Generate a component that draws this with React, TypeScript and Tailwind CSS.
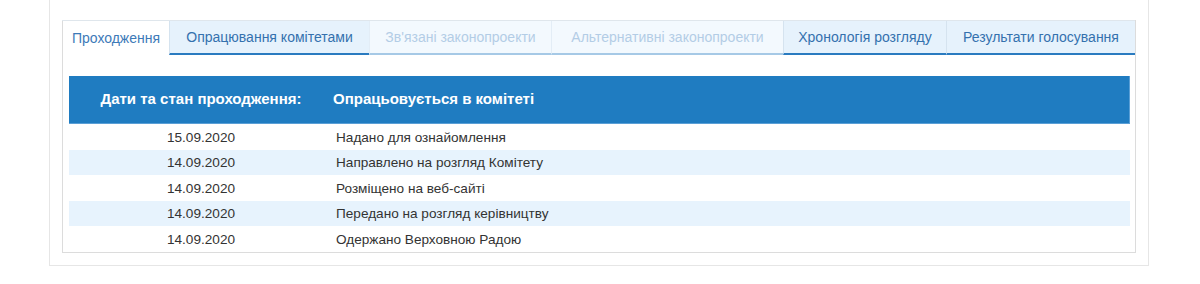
const tabs = [
  { label: "Проходження", w: "w-[107px]", state: "active" },
  { label: "Опрацювання комітетами", w: "w-[200px]", state: "on" },
  { label: "Зв'язані законопроекти", w: "w-[182px]", state: "off" },
  { label: "Альтернативні законопроекти", w: "w-[232px]", state: "off" },
  { label: "Хронологія розгляду", w: "w-[163px]", state: "on" },
  { label: "Результати голосування", w: "flex-1", state: "on" },
]

const rows = [
  ["15.09.2020", "Надано для ознайомлення"],
  ["14.09.2020", "Направлено на розгляд Комітету"],
  ["14.09.2020", "Розміщено на веб-сайті"],
  ["14.09.2020", "Передано на розгляд керівництву"],
  ["14.09.2020", "Одержано Верховною Радою"],
]

const tabClass = (state: string) => {
  if (state === "active")
    return "bg-white text-[#3d7ab8] border-l border-[#dcdcdc]"
  if (state === "on")
    return "bg-[#e6f2fc] text-[#3471ae] border-l border-[#d5e3ef] border-b-2 border-b-[#2a7bc0]"
  return "bg-[#f3f9fe] text-[#b3cde6] border-l border-[#e3edf6] border-b-2 border-b-[#a6c9e6]"
}

export default function App() {
  return (
    <div className="w-[1200px] h-[284px] bg-white font-['Liberation_Sans',Arial,sans-serif]">
      <div className="ml-[49px] w-[1100px] border-x border-b border-[#e6e6e6] px-[12px] pt-[20px] pb-[12px]">
        <div className="border-r border-b border-[#dcdcdc]">
          <div className="flex h-[35px] border-t border-[#dfe6ec]">
            {tabs.map((t) => (
              <div
                key={t.label}
                className={`${t.w} ${tabClass(t.state)} flex items-center justify-center text-[14px] whitespace-nowrap`}
              >
                {t.label}
              </div>
            ))}
          </div>
          <div className="border-l border-[#dcdcdc] pl-[6px] pr-[5px] pt-[21px]">
            <div className="flex items-center h-[48px] bg-[#1f7cc1] border-b border-r border-[#5a9fd6] text-white font-bold text-[15px]">
              <div className="w-[264px] text-center">Дати та стан проходження:</div>
              <div>Опрацьовується в комітеті</div>
            </div>
            {rows.map(([d, s], i) => (
              <div
                key={i}
                className={`flex items-center h-[25.6px] pt-[2px] text-[13.6px] text-[#333333] ${i % 2 === 1 ? "bg-[#e7f3fd]" : "bg-white"}`}
              >
                <div className="w-[264px] text-center">{d}</div>
                <div className="pl-[3px]">{s}</div>
              </div>
            ))}
          </div>
        </div>
      </div>
    </div>
  )
}
